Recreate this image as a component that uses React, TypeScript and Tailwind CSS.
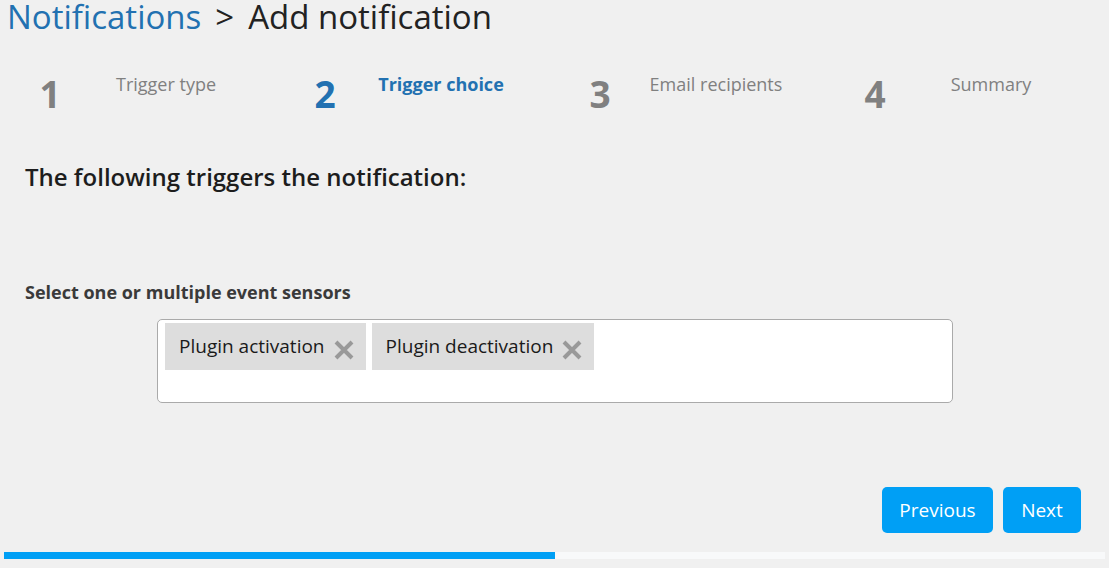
import React from 'react';

const steps = [
  { n: 1, label: 'Trigger type' },
  { n: 2, label: 'Trigger choice' },
  { n: 3, label: 'Email recipients' },
  { n: 4, label: 'Summary' },
];

const Tag: React.FC<{ text: string }> = ({ text }) => (
  <div className="flex items-center h-[47px] bg-[#dddddd] pl-[14px] pr-[11px] gap-[8px]">
    <span className="text-[19px] text-[#1a1a1a]">{text}</span>
    <svg width="22" height="22" viewBox="0 0 22 22" className="mt-[6px]">
      <path d="M3 3 L19 19 M19 3 L3 19" stroke="#999999" strokeWidth="4" strokeLinecap="butt" />
    </svg>
  </div>
);

export default function App() {
  const active = 2;
  return (
    <div
      className="w-[1109px] h-[568px] bg-[#f0f0f0] overflow-hidden"
      style={{ fontFamily: '"Open Sans", "Noto Sans", sans-serif' }}
    >
      {/* breadcrumb title */}
      <h1 className="pl-[7px] text-[33px] leading-[33px] font-normal text-[#222] whitespace-nowrap">
        <span className="text-[#2271b1]">Notifications</span>
        <span className="mx-[14px]">&gt;</span>
        <span>Add notification</span>
      </h1>

      {/* stepper */}
      <div className="grid grid-cols-4 w-[1100px] ml-[4px] mt-[39px]">
        {steps.map(s => (
          <div key={s.n} className="flex items-start">
            <div
              className={`w-[92px] text-center text-[37px] leading-[38px] font-bold mt-[3px] ${
                s.n === active ? 'text-[#2271b1]' : 'text-[#808080]'
              }`}
            >
              {s.n}
            </div>
            <div
              className={`w-[140px] text-center text-[18px] leading-[24px] whitespace-nowrap ${
                s.n === active ? 'text-[#2271b1] font-bold' : 'text-[#808080]'
              }`}
            >
              {s.label}
            </div>
          </div>
        ))}
      </div>

      <div className="pl-[25px]">
        <h2 className="mt-[49px] text-[24px] leading-[30px] font-semibold text-[#1d1d1d]">
          The following triggers the notification:
        </h2>
        <div className="mt-[89px] text-[18px] leading-[22px] font-bold text-[#3a3a3a]">
          Select one or multiple event sensors
        </div>
      </div>

      <div className="ml-[157px] mt-[16px] w-[796px] h-[84px] bg-white border border-[#aaaaaa] rounded-[5px] pl-[7px] pt-[3px] flex items-start gap-[6px]">
        <Tag text="Plugin activation" />
        <Tag text="Plugin deactivation" />
      </div>

      <div className="flex justify-end gap-[10px] mr-[28px] mt-[84px]">
        <button className="h-[46px] w-[111px] rounded-[5px] bg-[#009ff5] text-white text-[19px]">
          Previous
        </button>
        <button className="h-[46px] w-[78px] rounded-[5px] bg-[#009ff5] text-white text-[19px]">
          Next
        </button>
      </div>

      <div className="ml-[4px] mt-[19px] w-[1101px] h-[7px] bg-[#f8f9fa]">
        <div className="h-full bg-[#009ff5]" style={{ width: `${(active / steps.length) * 100}%` }} />
      </div>
    </div>
  );
}
